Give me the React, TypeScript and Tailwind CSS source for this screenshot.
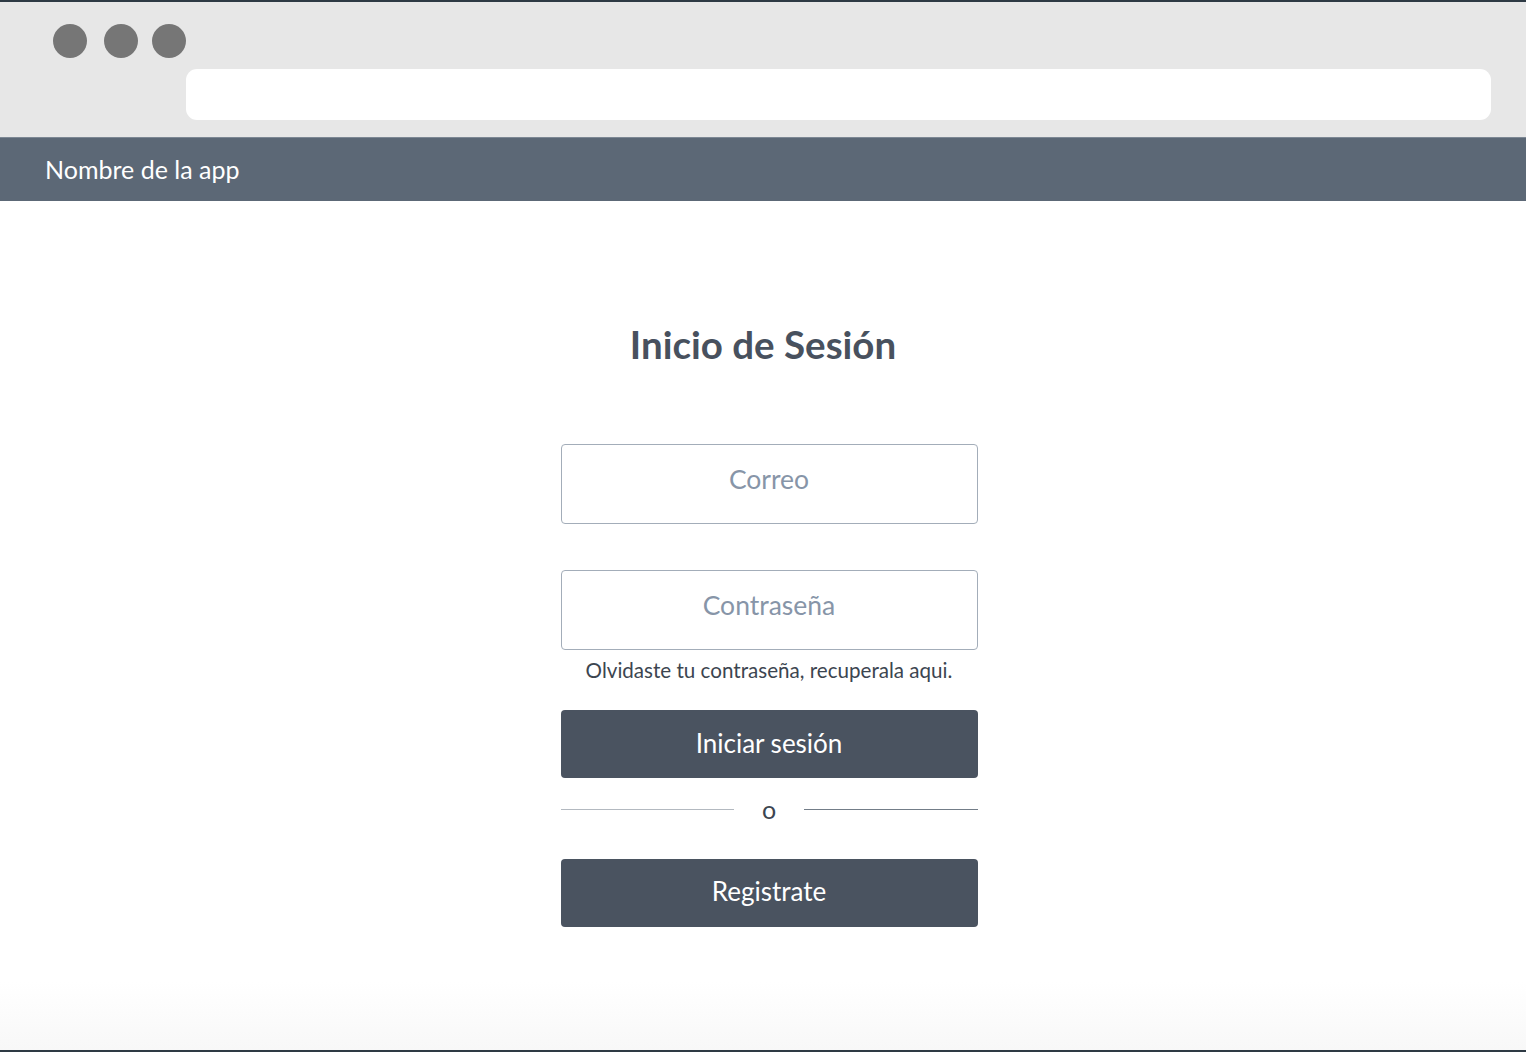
import * as React from "react";

const lato = { fontFamily: "Lato, 'Open Sans', sans-serif" };

const App = () => {
    return (
        <div className="h-[1052px] w-full flex flex-col bg-white overflow-hidden" style={lato}>
            {/* browser chrome */}
            <div className="h-[2px] bg-[#2e3a44]" />
            <div className="h-[136px] bg-[#e7e7e7] border-b border-[#7d8894]">
                <div className="flex pl-[53px] pt-[22px]">
                    <div className="w-[34px] h-[34px] rounded-full bg-[#767676]" />
                    <div className="w-[34px] h-[34px] rounded-full bg-[#767676] ml-[17px]" />
                    <div className="w-[34px] h-[34px] rounded-full bg-[#767676] ml-[14px]" />
                </div>
                <div className="ml-[186px] mr-[35px] mt-[11px] h-[51px] bg-white rounded-[11px]" />
            </div>

            {/* nav */}
            <div className="h-[63px] bg-[#5c6876] flex items-center px-[45px]">
                <span className="text-white text-[25px]">Nombre de la app</span>
            </div>

            {/* login */}
            <div className="flex-1 flex flex-col items-center bg-gradient-to-b from-white from-[92%] to-[#f8f8f8]">
                <h1 className="mt-[119px] text-[38.5px] font-bold text-[#48515e] leading-[48px]">Inicio de Sesión</h1>

                <div className="mt-[76px] w-[417px] flex flex-col ml-[12px]">
                    <input
                        placeholder="Correo"
                        className="h-[80px] w-full border border-[#a3adb9] rounded-[4px] text-center text-[26.5px] pb-[10px] placeholder:text-[#8795a8] outline-none"
                        style={lato}
                    />
                    <input
                        placeholder="Contraseña"
                        className="mt-[46px] h-[80px] w-full border border-[#a3adb9] rounded-[4px] text-center text-[26.5px] pb-[10px] placeholder:text-[#8795a8] outline-none"
                        style={lato}
                    />
                    <p className="mt-[6px] text-center text-[20.6px] text-[#3c4550] leading-[28px]">Olvidaste tu contraseña, recuperala aqui.</p>

                    <button className="mt-[26px] h-[68px] w-full bg-[#4a5360] rounded-[4px] text-white text-[26px] pb-[2px]" style={lato}>
                        Iniciar sesión
                    </button>

                    <div className="mt-[14px] flex items-center h-[34px]">
                        <div className="flex-1 h-px bg-[#b3b9c0]" />
                        <span className="w-[70px] text-center text-[25px] text-[#3c4550] leading-none">o</span>
                        <div className="flex-1 h-px bg-[#737d88]" />
                    </div>

                    <button className="mt-[33px] h-[68px] w-full bg-[#4a5360] rounded-[4px] text-white text-[26px] pb-[3px]" style={lato}>
                        Registrate
                    </button>
                </div>
            </div>
            <div className="h-[2px] bg-[#2e3a44]" />
        </div>
    );
};

export default App;
